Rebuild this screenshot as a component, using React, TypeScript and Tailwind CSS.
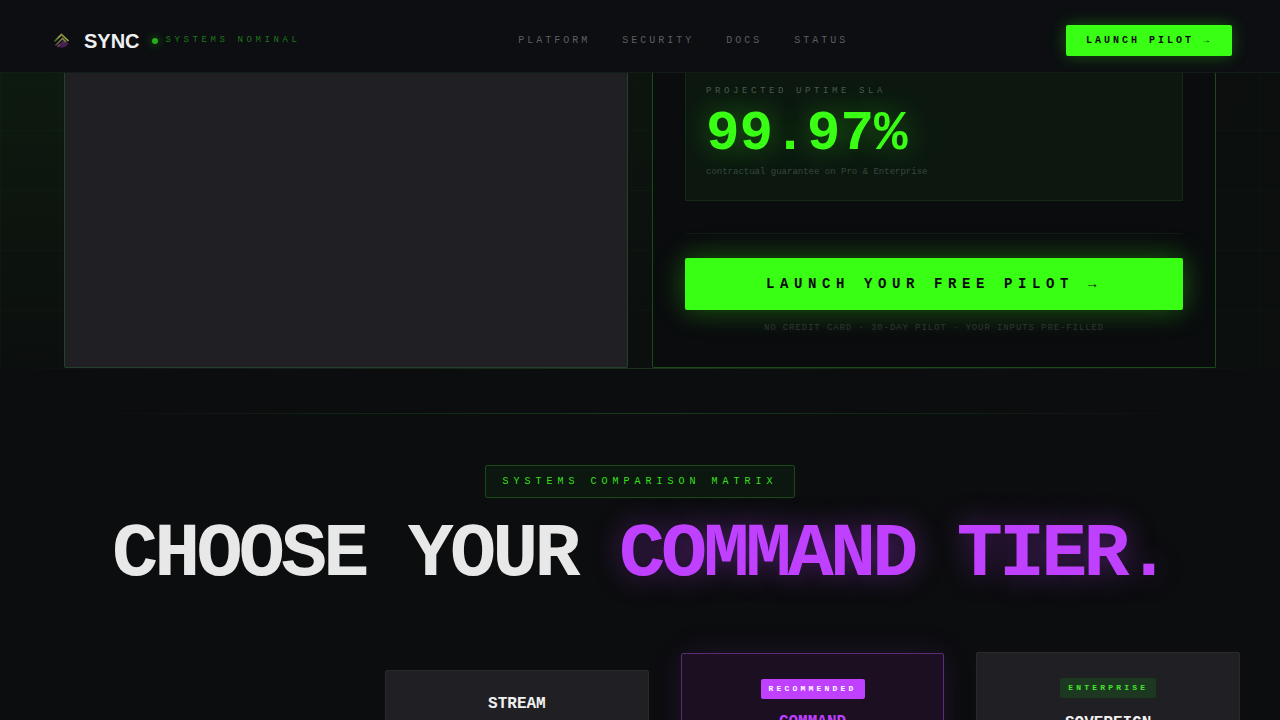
import React from "react";

const NAV_LINKS = ["PLATFORM", "SECURITY", "DOCS", "STATUS"];

function Logo() {
  return (
    <svg viewBox="0 0 28 28" className="size-7" aria-hidden="true">
      <defs>
        <linearGradient id="roof" x1="0" y1="1" x2="1" y2="0">
          <stop offset="0" stopColor="#2f5a28" />
          <stop offset="0.5" stopColor="#a5ab45" />
          <stop offset="1" stopColor="#6f7448" />
        </linearGradient>
        <linearGradient id="inner" x1="0" y1="1" x2="1" y2="0">
          <stop offset="0" stopColor="#5b4a3c" />
          <stop offset="1" stopColor="#8f8a4a" />
        </linearGradient>
        <linearGradient id="base" x1="0" y1="0" x2="0" y2="1">
          <stop offset="0" stopColor="#4a3048" />
          <stop offset="1" stopColor="#431653" />
        </linearGradient>
      </defs>
      <path d="M11 17.5 15.5 13.5 20.5 16.5 18 19.5 14 21 10.5 19.5Z" fill="url(#base)" />
      <path d="M6.5 14.5 13.5 7.5 20.5 14" fill="none" stroke="url(#roof)" strokeWidth="1.7" />
      <path d="M7.5 18.5 14.5 11.5 18 15" fill="none" stroke="url(#inner)" strokeWidth="1.7" />
      <path d="M9.5 20 12 17.5" fill="none" stroke="#7a4a6c" strokeWidth="1.2" />
    </svg>
  );
}

function Header() {
  return (
    <header className="relative z-10 flex items-center justify-between border-b border-[#131d18] bg-[#0c0e11] px-12 pt-[25px] pb-4">
      <div className="flex items-center gap-3">
        <a href="#top" className="flex items-center gap-2">
          <Logo />
          <span className="font-['Liberation_Sans',sans-serif] text-xl leading-7 font-bold text-[#f0f0f2]">SYNC</span>
        </a>
        <div className="flex items-center gap-2">
          <span className="size-1.5 rounded-full bg-[#24b016] shadow-[0_0_8px_#1f8a14]" />
          <span className="pb-0.5 text-[9px] leading-3 tracking-[0.4em] text-[#1f771a]">SYSTEMS NOMINAL</span>
        </div>
      </div>
      <nav className="flex gap-8">
        {NAV_LINKS.map((label) => (
          <a key={label} href={`#${label.toLowerCase()}`} className="text-[10px] leading-4 tracking-[0.3em] text-[#5c5e61]">
            {label}
          </a>
        ))}
      </nav>
      <button className="rounded-xs bg-[#39ff14] px-5 py-2 text-[10px] leading-[15px] font-bold tracking-[0.3em] text-[#0a0b0d] shadow-[0_0_16px_rgba(57,255,20,0.3)]">
        LAUNCH PILOT →
      </button>
    </header>
  );
}

function RoiSection() {
  return (
    <section className="bg-[radial-gradient(ellipse_at_0%_0%,rgba(57,255,20,0.055),rgba(57,255,20,0.008)_70%)]">
      <div className="bg-[linear-gradient(rgba(57,255,20,0.025)_1px,transparent_1px),linear-gradient(90deg,rgba(57,255,20,0.025)_1px,transparent_1px)] bg-size-[60px_60px] bg-position-[0_57px]">
        <div className="grid grid-cols-2 gap-6 px-16">
          <div className="rounded-b-xs border border-t-0 border-[#24402a] bg-[#1f1f24]" />
          <div className="rounded-b-xs border border-t-0 border-[#1b4a19] bg-[#0a0c0e] px-8 pb-8">
            <div className="border border-t-0 border-[#132a18] bg-[#0c1710] px-5 pt-[11px] pb-5">
              <p className="text-[9px] leading-[14px] tracking-[0.4em] text-[#4c5a4d]">PROJECTED UPTIME SLA</p>
              <p className="mt-2 text-[56px] leading-none font-bold text-[#39ff14] [text-shadow:0_0_30px_rgba(57,255,20,0.4)]">
                99.97%
              </p>
              <p className="mt-[3px] text-[9px] leading-[15px] text-[#37483b]">contractual guarantee on Pro &amp; Enterprise</p>
            </div>
            <div className="mt-8 border-t border-[#101a13] pt-6">
              <button className="block w-full rounded-xs bg-[#39ff14] py-4 text-sm leading-5 font-bold tracking-[0.4em] text-[#0a0b0d] shadow-[0_0_28px_rgba(57,255,20,0.35)]">
                LAUNCH YOUR FREE PILOT →
              </button>
              <p className="mt-3 text-center text-[9px] leading-[13px] tracking-[0.1em] text-[#303633]">
                NO CREDIT CARD · 30-DAY PILOT · YOUR INPUTS PRE-FILLED
              </p>
            </div>
          </div>
        </div>
      </div>
      <div className="h-px bg-linear-to-r from-transparent via-[#1c3020] to-transparent" />
    </section>
  );
}

function TierCard({ name, badge, tone }: { name: string; badge?: string; tone: "plain" | "featured" | "enterprise" }) {
  const card =
    tone === "featured"
      ? "border-[#5d2c78] bg-[#1c0f22] shadow-[0_0_32px_rgba(191,64,255,0.12)]"
      : "border-[#29292e] bg-[#1f1f24]";
  const spacing = badge ? "pt-[25px] pb-[95px]" : "pt-6 pb-24";
  const badgeStyle = tone === "featured" ? "mb-3.5 bg-[#bf40ff] text-white" : "mb-4 bg-[#1c3820] text-[#45e62a]";
  return (
    <article className={`flex flex-col items-center rounded-xs border px-6 ${spacing} ${card}`}>
      {badge && (
        <span className={`rounded-xs px-2 py-1 text-[8px] leading-3 font-bold tracking-[0.4em] ${badgeStyle}`}>{badge}</span>
      )}
      <h3 className={`text-base leading-[18px] font-bold ${tone === "featured" ? "text-[#bf40ff]" : "text-[#f0f0f0]"}`}>
        {name}
      </h3>
    </article>
  );
}

function TiersSection() {
  return (
    <section className="pt-11">
      <div className="mx-16 h-px bg-linear-to-r from-transparent via-[#173a1a] to-transparent" />
      <div className="flex flex-col items-center pt-[51px]">
        <p className="rounded-xs border border-[#1b4a19] bg-[#0b170f] px-4 py-2 text-[10px] leading-[15px] tracking-[0.5em] text-[#39e01c]">
          SYSTEMS COMPARISON MATRIX
        </p>
        <h2 className="mt-[19px] text-[6vw] leading-none font-bold tracking-tighter whitespace-nowrap text-[#e8e8e8]">
          CHOOSE YOUR{" "}
          <span className="text-[#bf40ff] [text-shadow:0_0_30px_rgba(191,64,255,0.4)]">COMMAND TIER.</span>
        </h2>
      </div>
      <div className="grid grid-cols-[19fr_16fr_16fr_16fr] items-center gap-8 px-10 pt-[58px]">
        <div />
        <TierCard name="STREAM" tone="plain" />
        <TierCard name="COMMAND" badge="RECOMMENDED" tone="featured" />
        <TierCard name="SOVEREIGN" badge="ENTERPRISE" tone="enterprise" />
      </div>
    </section>
  );
}

export default function App() {
  return (
    <div id="top" className="h-screen overflow-hidden bg-[#0b0d0e] font-['Liberation_Mono',monospace]">
      <Header />
      <RoiSection />
      <TiersSection />
    </div>
  );
}
